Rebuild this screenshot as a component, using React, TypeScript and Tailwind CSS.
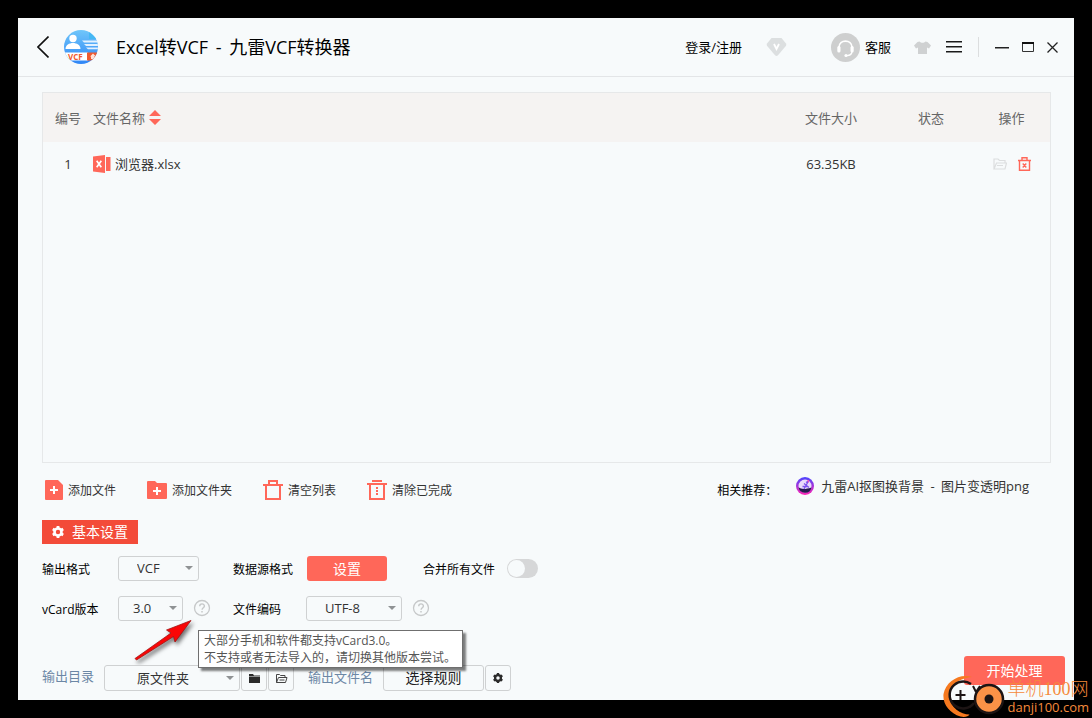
import { useState } from "react";
import type { ReactNode } from "react";

interface DropDownProps {
  id: string;
  options: string[];
  className: string;
  selectClass: string;
  arrowClass: string;
}

function DropDown({ id, options, className, selectClass, arrowClass }: DropDownProps) {
  return (
    <span className={`relative inline-flex shrink-0 ${className}`}>
      <select
        id={id}
        className={`h-full w-full appearance-none rounded-[3px] border border-[#cfd1d2] bg-[#f7fafb] text-[#333] outline-none ${selectClass}`}
      >
        {options.map((o) => (
          <option key={o}>{o}</option>
        ))}
      </select>
      <svg
        className={`pointer-events-none absolute h-1 w-2 ${arrowClass}`}
        viewBox="0 0 8 4"
        fill="#8f9294"
      >
        <path d="M0 0h8L4 4z" />
      </svg>
    </span>
  );
}

function ToolButton({ icon, children }: { icon: ReactNode; children: ReactNode }) {
  return (
    <button className="flex items-center gap-[5px] text-[12px] leading-5 text-[#333]">
      {icon}
      <span className="pt-[2px]">{children}</span>
    </button>
  );
}

function HelpButton({ label }: { label: string }) {
  return (
    <button aria-label={label} className="block h-4 w-4">
      <svg viewBox="0 0 16 16" className="h-4 w-4 overflow-visible" fill="none" stroke="#c6c8c9">
        <circle cx="8" cy="8" r="7.5" strokeWidth="1.3" />
        <path d="M5.7 6.2c0-3 4.7-3 4.7-.2 0 1.7-2.3 1.9-2.3 3.8" strokeWidth="1.4" />
        <path d="M8 11v1.5" strokeWidth="1.5" />
      </svg>
    </button>
  );
}

function Logo() {
  return (
    <svg viewBox="0 0 34 34" className="h-[34px] w-[34px]">
      <defs>
        <linearGradient id="logoBg" x1="0" y1="0" x2="0" y2="1">
          <stop offset="0" stopColor="#6fc6fa" />
          <stop offset="1" stopColor="#2f86f6" />
        </linearGradient>
        <clipPath id="logoClip">
          <circle cx="17" cy="17" r="17" />
        </clipPath>
      </defs>
      <g clipPath="url(#logoClip)">
        <path d="M0 0h34v34H0z" fill="url(#logoBg)" />
        <path d="M25 2v7h9z" fill="#45b8f4" />
        <circle cx="9" cy="8.500" r="3.700" fill="#fff" />
        <path d="M1.500 19c0-8 15-8 15 0z" fill="#fff" />
        <path d="M18 10.500h17v2H20zM20 14h15v2H22zM22 17.500h12v1.700H24z" fill="#e3f1ff" />
        <path d="M0 22.500h24v8H0z" fill="#fff" />
        <path d="M23 22.500h11v8H23z" fill="#f0592e" />
        <text x="4" y="29.500" fontSize="8" fontWeight="700" fill="#f0592e">
          VCF
        </text>
        <path d="M29 23.500l3 3h-2v2.500h-3v-2.500h-1z" fill="#ffe1d6" />
      </g>
    </svg>
  );
}

function Header() {
  return (
    <header className="flex h-[59px] items-center border-b border-[#e3e5e7] pr-4 pl-[19px]">
      <button aria-label="返回" className="mr-[15px]">
        <svg viewBox="0 0 12 22" className="h-[22px] w-3" fill="none" stroke="#111" strokeWidth="1.6">
          <path d="M11.500 .5L1 11l10.500 10.500" />
        </svg>
      </button>
      <Logo />
      <h1 className="ml-[18px] text-[18px] leading-6 text-black">
        Excel转VCF <span className="mx-[3px]">-</span> 九雷VCF转换器
      </h1>

      <div className="ml-auto flex items-center text-[13px] leading-5 text-black">
        <a href="#login">登录/注册</a>
        <button aria-label="会员" className="ml-6">
          <svg viewBox="0 0 21 20" className="h-5 w-[21px]">
            <path
              d="M5.500 1h10L20 6.500q.7 1.200 0 2.300L12 18.300q-1.500 1.400-3 0L1 8.800q-.7-1.100 0-2.300z"
              fill="#dcdfe0"
            />
            <path d="M8 7l2.500 5L13 7" fill="none" stroke="#fff" strokeWidth="1.800" />
          </svg>
        </button>
        <button className="ml-11 flex items-center gap-[5px]">
          <svg viewBox="0 0 29 29" className="h-[29px] w-[29px]">
            <circle cx="14.500" cy="14.500" r="14.500" fill="#cecfcf" />
            <path d="M8 14.500c0-8.500 13-8.500 13 0" fill="none" stroke="#fff" strokeWidth="1.700" />
            <rect x="6.300" y="13" width="3.200" height="6.500" rx="1.500" fill="#fff" />
            <rect x="19.500" y="13" width="3.200" height="6.500" rx="1.500" fill="#fff" />
            <path d="M21 19c-.5 2.500-2.500 3.500-5 3.700" fill="none" stroke="#fff" strokeWidth="1.300" />
            <circle cx="15" cy="22.500" r="1.600" fill="#fff" />
          </svg>
          客服
        </button>
        <button aria-label="换肤" className="ml-[23px]">
          <svg viewBox="0 0 17 13" className="h-[13px] w-[17px]" fill="#cfd1d2">
            <path d="M5.500.5c1.500 1.700 4.500 1.700 6 0l2 .5L17 4.500l-2 3-2-1V13H4V6.500l-2 1-2-3L3.500 1z" />
          </svg>
        </button>
        <button aria-label="菜单" className="ml-[15px]">
          <svg viewBox="0 0 16 12" className="h-3 w-4" fill="#1a1a1a">
            <path d="M0 0h16v1.600H0zM0 5h16v1.600H0zM0 10h16v1.600H0z" />
          </svg>
        </button>
        <span className="ml-4 h-5 w-px bg-[#dcdedf]" />
        <button aria-label="最小化" className="ml-4">
          <svg viewBox="0 0 14 10" className="h-[10px] w-[14px]">
            <path d="M0 5h14v1.500H0z" fill="#222" />
          </svg>
        </button>
        <button aria-label="最大化" className="ml-[13px]">
          <svg viewBox="0 0 12 10" className="h-[10px] w-3">
            <path d="M.5 1.500h11v8H.5z" fill="none" stroke="#333" />
            <path d="M0 0h12v2H0z" fill="#111" />
          </svg>
        </button>
        <button aria-label="关闭" className="ml-[13px]">
          <svg viewBox="0 0 11 11" className="h-[11px] w-[11px]" stroke="#222" strokeWidth="1.300">
            <path d="M.5.5l10 10M10.500.5l-10 10" />
          </svg>
        </button>
      </div>
    </header>
  );
}

function FileTable() {
  return (
    <div className="flex-1 border border-[#e6e8e9]">
      <table className="w-full table-fixed text-[13px] leading-5">
        <colgroup>
          <col className="w-[50px]" />
          <col />
          <col className="w-[116px]" />
          <col className="w-[84px]" />
          <col className="w-[77px]" />
        </colgroup>
        <thead className="h-[49px] bg-[#f5f3f2] text-[#666]">
          <tr>
            <th className="font-normal">编号</th>
            <th className="text-left font-normal">
              <button className="flex items-center gap-1">
                文件名称
                <svg viewBox="0 0 12 15" className="h-[15px] w-3" fill="#ff6759">
                  <path d="M6 0l6 6H0zM6 15l6-6H0z" />
                </svg>
              </button>
            </th>
            <th className="font-normal">文件大小</th>
            <th className="font-normal">状态</th>
            <th className="font-normal">操作</th>
          </tr>
        </thead>
        <tbody>
          <tr className="h-[43px] text-[#333]">
            <td className="text-center">1</td>
            <td>
              <span className="flex items-center gap-1">
                <svg viewBox="0 0 18 18" className="h-[18px] w-[18px]">
                  <path d="M0 1.500L12 0v18L0 16.500zM13 2h4.500v14H13z" fill="#ff6759" />
                  <path d="M3.700 5.800l4.600 6.400M8.300 5.800l-4.600 6.400" stroke="#fff" strokeWidth="1.700" />
                </svg>
                浏览器.xlsx
              </span>
            </td>
            <td className="text-center">63.35KB</td>
            <td />
            <td>
              <span className="flex items-center justify-center gap-[11px]">
                <button aria-label="打开文件夹">
                  <svg viewBox="0 0 14 12" className="h-3 w-[14px]" fill="none" stroke="#dcdedf" strokeWidth="1.200">
                    <path d="M1 11V1h4l1.500 1.500H12V5M1 11l2.500-6h10L12 11zM4 7.500h6" />
                  </svg>
                </button>
                <button aria-label="删除">
                  <svg viewBox="0 0 13 14" className="h-[14px] w-[13px]" fill="none" stroke="#ff6759" strokeWidth="1.400">
                    <path d="M0 3.500h13M4 3.500V.8h5v2.700M1.500 3.500v9.700h10V3.500M4.700 6.500l3.600 4M8.300 6.500l-3.600 4" />
                  </svg>
                </button>
              </span>
            </td>
          </tr>
        </tbody>
      </table>
    </div>
  );
}

function Toolbar() {
  return (
    <div className="mt-4 flex h-[22px] items-center pr-[22px] pl-[3px]">
      <div className="flex gap-[31px]">
        <ToolButton
          icon={
            <svg viewBox="0 0 18 20" className="h-5 w-[18px]">
              <path d="M1 0h12l5 5v14q0 1-1 1H1q-1 0-1-1V1q0-1 1-1z" fill="#ff6759" />
              <path d="M5 10h8M9 6v8" stroke="#fff" strokeWidth="2" />
            </svg>
          }
        >
          添加文件
        </ToolButton>
        <ToolButton
          icon={
            <svg viewBox="0 0 20 20" className="h-5 w-5">
              <path d="M1 1h7l2 2h9q1 0 1 1v14q0 1-1 1H1q-1 0-1-1V2q0-1 1-1z" fill="#ff6759" />
              <path d="M6 11h8M10 7v8" stroke="#fff" strokeWidth="2" />
            </svg>
          }
        >
          添加文件夹
        </ToolButton>
        <ToolButton
          icon={
            <svg viewBox="0 0 20 20" className="h-5 w-5" fill="none" stroke="#ff6759" strokeWidth="2">
              <path d="M0 5h20M6 5V1h8v4M3 5v14h14V5" />
            </svg>
          }
        >
          清空列表
        </ToolButton>
        <ToolButton
          icon={
            <svg viewBox="0 0 20 20" className="h-5 w-5" fill="none" stroke="#ff6759" strokeWidth="2">
              <path d="M0 4h20M5 1h10M3 4v15h14V4" />
              <path d="M10 7v8" strokeDasharray="2 1" />
            </svg>
          }
        >
          清除已完成
        </ToolButton>
      </div>
      <div className="ml-auto flex items-center gap-[19px]">
        <span className="pt-[2px] text-[12px] leading-5 text-black">相关推荐：</span>
        <a href="#koutu" className="flex items-center gap-[7px] pb-2 text-[13px] leading-5 text-[#333]">
          <svg viewBox="0 0 18 18" className="h-[18px] w-[18px]">
            <defs>
              <linearGradient id="ring" x1="0" y1="0" x2="0" y2="1">
                <stop offset="0" stopColor="#4b45ff" />
                <stop offset="1" stopColor="#ff25b4" />
              </linearGradient>
            </defs>
            <circle cx="9" cy="9" r="9" fill="url(#ring)" />
            <circle cx="9" cy="9" r="6.500" fill="#e9dcfb" />
            <path d="M2.600 10.200c3 2.500 7 2 12.800.2a6.500 6.500 0 0 1-12.800-.2z" fill="#231a4d" />
            <path d="M8 12L12.500 4M8 6.500l5 4M10 5.500L12.500 4M6.500 9.500h5" fill="none" stroke="#7b52ee" strokeWidth="1.300" />
            <path d="M11 3.500l2-.5v3z" fill="#f44fb8" />
          </svg>
          <span>
            九雷AI抠图换背景 <span className="mx-[3px]">-</span> 图片变透明png
          </span>
        </a>
      </div>
    </div>
  );
}

function Settings() {
  const [merge, setMerge] = useState(false);

  return (
    <section>
      <h2 className="mt-[19px] flex h-6 w-24 items-center gap-2 bg-[#f34b39] pl-[10px] text-[14px] leading-5 whitespace-nowrap text-white">
        <svg viewBox="0 0 12 12" className="h-3 w-3">
          <circle cx="6" cy="6" r="3.500" fill="none" stroke="#fff" strokeWidth="2.600" />
          <path
            d="M6 0v2.500M6 9.500V12M.8 3l2.200 1.300M9 7.700L11.200 9M.8 9L3 7.700M9 4.300L11.200 3"
            stroke="#fff"
            strokeWidth="2.800"
          />
        </svg>
        基本设置
      </h2>

      <div className="mt-3 grid grid-cols-[76px_115px_73px_117px_auto] items-center gap-y-[15px] text-[12px] leading-5 text-black">
        <label htmlFor="format" className="pt-[2px]">
          输出格式
        </label>
        <DropDown
          id="format"
          options={["VCF"]}
          className="h-[25px] w-[81px]"
          selectClass="pb-[2px] pl-[18px] text-[13px] leading-5"
          arrowClass="top-[10px] right-[6px]"
        />
        <span id="source" className="pt-[2px]">
          数据源格式
        </span>
        <button
          aria-describedby="source"
          className="ml-px h-[25px] w-20 rounded-[3px] bg-[#ff6759] text-[14px] leading-5 text-white"
        >
          设置
        </button>
        <label className="flex items-center gap-3">
          <span className="pt-[2px]">合并所有文件</span>
          <input
            type="checkbox"
            role="switch"
            checked={merge}
            onChange={(e) => setMerge(e.target.checked)}
            className="h-[19px] w-[31px] appearance-none rounded-full bg-[#d6d7d8] p-px before:block before:h-[17px] before:w-[17px] before:rounded-full before:bg-[#f7fafb] checked:bg-[#ff6759] checked:before:ml-3"
          />
        </label>

        <label htmlFor="version" className="pt-[2px]">
          vCard版本
        </label>
        <div className="flex items-start gap-[11px]">
          <DropDown
            id="version"
            options={["3.0", "2.1", "4.0"]}
            className="h-[25px] w-[65px]"
            selectClass="pb-[2px] pl-[14px] text-[13px] leading-5"
            arrowClass="top-[10px] right-[6px]"
          />
          <div className="relative mt-1">
            <HelpButton label="vCard版本说明" />
            <svg
              viewBox="0 0 64 46"
              className="pointer-events-none absolute top-4 -left-[62px] h-[46px] w-16 overflow-visible drop-shadow-[2px_3px_2px_rgba(0,0,0,0.55)]"
            >
              <path d="M3 42.500L39 17l-4.500-3L59 4.500 43 26l-1.500-5.500L4.500 44z" fill="#f90606" stroke="#a01414" strokeWidth=".8" />
            </svg>
            <div
              role="tooltip"
              className="absolute top-[30px] left-1 z-10 border border-[#6f6f6f] bg-white py-px pr-[6px] pl-[5px] text-[12px] leading-[17px] whitespace-nowrap text-[#555] shadow-[3px_3px_2px_rgba(0,0,0,0.5)]"
            >
              大部分手机和软件都支持vCard3.0。
              <br />
              不支持或者无法导入的，请切换其他版本尝试。
            </div>
          </div>
        </div>
        <label htmlFor="encoding" className="pt-[2px]">
          文件编码
        </label>
        <div className="flex items-start gap-[11px]">
          <DropDown
            id="encoding"
            options={["UTF-8", "GBK"]}
            className="h-[25px] w-24"
            selectClass="pb-[2px] pl-[18px] text-[13px] leading-5"
            arrowClass="top-[10px] right-[6px]"
          />
          <div className="mt-1">
            <HelpButton label="文件编码说明" />
          </div>
        </div>
      </div>
    </section>
  );
}

function Footer() {
  const square =
    "ml-px flex h-[26px] w-[26px] items-center justify-center rounded-[3px] border border-[#cfd1d2]";

  return (
    <footer className="mt-[35px] flex items-start pr-[9px] pb-[9px] pl-6">
      <div className="mt-[9px] flex items-center text-[13px] leading-5">
        <label htmlFor="folder" className="w-[62px] pb-1 text-[#6c87a5]">
          输出目录
        </label>
        <DropDown
          id="folder"
          options={["原文件夹", "自定义"]}
          className="h-[26px] w-[136px]"
          selectClass="pl-8 text-[13px] leading-5"
          arrowClass="top-[11px] right-[6px]"
        />
        <button aria-label="选择文件夹" className={square}>
          <svg viewBox="0 0 11 9" className="h-[9px] w-[11px]" fill="#2b2b2b">
            <path d="M0 0h4l1 1.500h6v1H0zM0 3h11v6H0z" />
          </svg>
        </button>
        <button aria-label="打开文件夹" className={square}>
          <svg viewBox="0 0 11 9" className="h-[9px] w-[11px] overflow-visible" fill="none" stroke="#444">
            <path d="M.5 8.500V.5h3l1 1h4.500V3.500M.5 8.500l2-5h8.500l-1.500 5zM3.500 6h5" />
          </svg>
        </button>
        <span id="rule" className="ml-[14px] w-[75px] pb-[2px] text-[#6c87a5]">
          输出文件名
        </span>
        <button
          aria-describedby="rule"
          className="h-[26px] w-[101px] rounded-[3px] border border-[#cfd1d2] text-[14px] leading-5 text-[#222]"
        >
          选择规则
        </button>
        <button aria-label="规则设置" className={square}>
          <svg viewBox="0 0 12 12" className="h-[10px] w-[10px]">
            <circle cx="6" cy="6" r="3.500" fill="none" stroke="#2b2b2b" strokeWidth="2.800" />
            <path
              d="M6 0v2.500M6 9.500V12M.8 3l2.200 1.300M9 7.700L11.200 9M.8 9L3 7.700M9 4.300L11.200 3"
              stroke="#2b2b2b"
              strokeWidth="2.800"
            />
          </svg>
        </button>
      </div>
      <button className="ml-auto h-[29px] w-[101px] rounded-[3px] bg-[#ff6759] text-[14px] leading-5 text-white">
        开始处理
      </button>
    </footer>
  );
}

function Watermark() {
  return (
    <div className="pointer-events-none absolute right-[3px] bottom-0 flex items-end">
      <svg viewBox="0 0 64 44" className="h-11 w-16" fill="none">
        <path d="M30 3C18-1 4 7 1.500 20c-1 10 6 19 17 22.500 4 1 8 0 9-2-9 0-19-7-20-17C7 12 17 4 30 3z" fill="#f6791f" />
        <path d="M29 10A13.500 13.500 0 1 0 32 29" stroke="#1c1414" strokeWidth="2.500" />
        <path d="M18.500 16v10M13.500 21h10" stroke="#1c1414" strokeWidth="2" />
        <path d="M31 12l3 6M38 12l-4 6" stroke="#1c1414" strokeWidth="2" />
        <circle cx="47" cy="25" r="14" fill="#fb9247" stroke="#1c1414" strokeWidth="2.500" />
        <circle cx="47" cy="25" r="4.500" fill="#1c1414" />
      </svg>
      <div className="pb-[3px] pl-px whitespace-nowrap text-[#f58a3c]">
        <p className="font-['Liberation_Serif','Noto_Sans_CJK_SC',serif] text-[18px] leading-5 font-light">单机100网</p>
        <p className="text-[13px] leading-4">danji100.com</p>
      </div>
    </div>
  );
}

export default function App() {
  return (
    <div className="relative flex min-h-screen flex-col bg-black p-[18px] font-['Open_Sans','Noto_Sans_CJK_SC',sans-serif]">
      <main className="flex flex-1 flex-col bg-[#f7fafb]">
        <Header />
        <div className="flex flex-1 flex-col pt-[15px] pr-[23px] pl-6">
          <FileTable />
          <Toolbar />
          <Settings />
        </div>
        <Footer />
      </main>
      <Watermark />
    </div>
  );
}
